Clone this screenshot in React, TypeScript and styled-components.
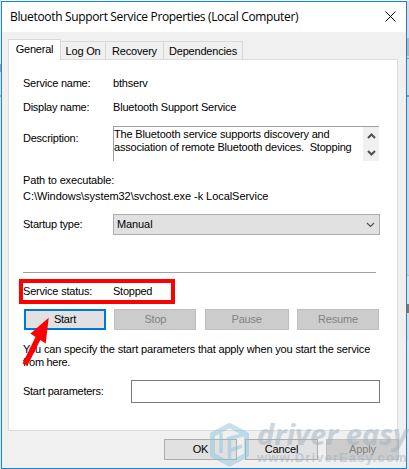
import React from 'react'
import styled, { createGlobalStyle } from 'styled-components'

const GlobalStyle = createGlobalStyle`
  * {
    box-sizing: border-box;
  }

  body {
    margin: 0;
    overflow: hidden;
    background: #dfe3e8;
  }
`

const Desktop = styled.div`
  position: relative;
  width: 409px;
  height: 469px;
  padding: 1px 2px 0 1px;
  overflow: hidden;
  background:
    linear-gradient(#e4e6e8 0 64px, #9a9fa5 64px 72px, #dce0e4 72px 95px, #a9b4be 95px 97px, #dfe4e9 97px) left / 1px 100% no-repeat,
    linear-gradient(
      #f4f4f4 0 1px, #d9dadd 1px 38px, #b4b7bb 38px 56px, #d4d8dc 56px 58px, #8f979f 58px 59px,
      #d4dae0 59px 95px, #7f9bb5 95px 97px, #d2d6da 97px 275px, #b9bfc5 275px 276px,
      #dde2e7 276px 304px, #8d7560 304px 313px, #d8dde2 313px 340px, #dfe5ea 340px
    );
  font: 11px/13px 'Liberation Sans', Arial, sans-serif;
  color: #000;
`

const Dialog = styled.div`
  display: flex;
  flex-direction: column;
  height: 468px;
  border: 1px solid #1883d7;
  background: #f0f0f0;
`

const TitleBar = styled.header`
  display: flex;
  justify-content: space-between;
  height: 30px;
  padding: 6px 10px 0 8px;
  background: #fff;
  font: 12px/17px 'Open Sans', sans-serif;
  white-space: nowrap;
`

const CloseIcon = styled.svg`
  width: 11px;
  height: 11px;
  margin-top: 3px;
`

const Text = styled.span<{ $track?: number }>`
  letter-spacing: ${p => p.$track ?? -0.2}px;
  white-space: pre;
`

const Tabs = styled.nav`
  display: flex;
  align-items: flex-end;
  height: 27px;
  padding-left: 6px;
`

const Tab = styled.div<{ $width: number; $active?: boolean }>`
  width: ${p => p.$width}px;
  height: ${p => (p.$active ? 21 : 18)}px;
  margin-bottom: ${p => (p.$active ? -1 : 0)}px;
  padding-top: 3px;
  border: 1px solid #d9d9d9;
  border-bottom: 0;
  border-left-width: ${p => (p.$active ? 1 : 0)}px;
  background: ${p => (p.$active ? '#fff' : '#f0f0f0')};
  text-align: center;
  z-index: 1;
`

const Panel = styled.main`
  display: flex;
  flex-direction: column;
  width: 390px;
  height: 372px;
  margin-left: 6px;
  padding: 17px 17px 0 14px;
  border: 1px solid #dcdcdc;
  background: #fff;
`

const Row = styled.div<{ $height: number; $label?: number }>`
  display: grid;
  grid-template-columns: ${p => p.$label || 90}px 1fr;
  align-items: center;
  flex: none;
  height: ${p => p.$height}px;
`

const DescriptionRow = styled(Row)`
  align-items: start;
  margin-top: 2px;
  line-height: 25px;
`

const Description = styled.div`
  display: flex;
  justify-content: space-between;
  height: 35px;
  margin-right: 1px;
  border-top: 1px solid #a0a0a0;
  border-left: 1px solid #a0a0a0;
  line-height: 13px;
`

const Lines = styled.div`
  display: flex;
  flex-direction: column;
  padding-top: 1px;
`

const ScrollBar = styled.div`
  display: flex;
  flex-direction: column;
  align-items: center;
  justify-content: center;
  gap: 11px;
  width: 16px;
  background: #f0f0f0;
`

const Chevron = styled.svg<{ $up?: boolean }>`
  width: 9px;
  height: 6px;
  transform: ${p => (p.$up ? 'rotate(180deg)' : 'none')};
`

const Path = styled.div`
  display: flex;
  flex-direction: column;
  margin: 11px 0 10px;
  line-height: 16px;
`

const Select = styled.div`
  display: flex;
  align-items: center;
  justify-content: space-between;
  height: 21px;
  padding: 0 4px 0 3px;
  border: 1px solid #adadad;
  background: #e1e1e1;
`

const Separator = styled.hr`
  flex: none;
  width: 353px;
  height: 1px;
  margin: 37px 0 6px;
  border: 0;
  background: #a0a0a0;
`

const Highlight = styled.div`
  display: grid;
  grid-template-columns: 90px 1fr;
  align-items: center;
  width: 156px;
  height: 25px;
  margin-left: -4px;
  border: 4px solid #f00;
`

const Buttons = styled.div`
  display: grid;
  grid-template-columns: 82px 82px 84px 82px;
  justify-content: space-between;
  width: 355px;
  margin: 5px 0 0 1px;
`

const Footer = styled.footer`
  display: flex;
  gap: 8px;
  padding: 8px 0 0 162px;
`

const Button = styled.button<{ $focused?: boolean }>`
  min-width: 73px;
  height: 21px;
  padding: 0;
  border: ${p => (p.$focused ? '2px solid #0078d7' : '1px solid #adadad')};
  background: #e1e1e1;
  color: #000;
  font: inherit;

  &:disabled {
    border-color: #bfbfbf;
    background: #ccc;
    color: #838383;
  }
`

const Hint = styled.p`
  display: flex;
  flex-direction: column;
  margin: 13px 0 11px;
`

const Input = styled.input`
  width: 249px;
  height: 23px;
  border: 1px solid #7a7a7a;
  background: #fff;
`

const Arrow = styled.svg`
  position: absolute;
  left: 0;
  top: 300px;
  width: 60px;
  height: 70px;
`

const Watermark = styled.div`
  position: absolute;
  left: 208px;
  top: 421px;
  display: flex;
  opacity: 0.5;
  pointer-events: none;
`

const Logo = styled.svg`
  width: 43px;
  height: 47px;
`

const Wordmark = styled.div`
  display: flex;
  flex-direction: column;
  margin: -4px 0 0 6px;
  color: #9fb0bf;
  white-space: nowrap;
`

const Brand = styled.span`
  font: italic bold 29px/34px 'Open Sans', sans-serif;
`

const Site = styled.span`
  font: bold 13px/14px 'Liberation Sans', Arial, sans-serif;
  letter-spacing: 1.1px;
`

const ChevronIcon = ({ up, bold }: { up?: boolean; bold?: boolean }) => (
  <Chevron $up={up} viewBox="0 0 9 6">
    <path d="M1 1 L4.5 4.5 L8 1" fill="none" stroke="#505050" strokeWidth={bold ? 2 : 1.2}/>
  </Chevron>
)

const App: React.FunctionComponent = () => {
  return <Desktop>
    <GlobalStyle/>
    <Dialog>
      <TitleBar>
        <Text $track={-0.34}>Bluetooth Support Service Properties (Local Computer)</Text>
        <CloseIcon viewBox="0 0 11 11">
          <path d="M.5 .5 L10.5 10.5 M10.5 .5 L.5 10.5" stroke="#000" strokeWidth="1"/>
        </CloseIcon>
      </TitleBar>
      <Tabs>
        <Tab $width={53} $active><Text>General</Text></Tab>
        <Tab $width={45}><Text>Log On</Text></Tab>
        <Tab $width={58}><Text>Recovery</Text></Tab>
        <Tab $width={79}><Text>Dependencies</Text></Tab>
      </Tabs>
      <Panel>
        <Row $height={13}><Text $track={-0.23}>Service name:</Text><Text>bthserv</Text></Row>
        <Row $height={34}><Text $track={-0.27}>Display name:</Text><Text $track={-0.18}>Bluetooth Support Service</Text></Row>
        <DescriptionRow $height={35}>
          <Text $track={-0.23}>Description:</Text>
          <Description>
            <Lines>
              <Text $track={-0.16}>The Bluetooth service supports discovery and</Text>
              <Text $track={-0.19}>association of remote Bluetooth devices.  Stopping</Text>
            </Lines>
            <ScrollBar>
              <ChevronIcon up bold/>
              <ChevronIcon bold/>
            </ScrollBar>
          </Description>
        </DescriptionRow>
        <Path>
          <Text $track={-0.16}>Path to executable:</Text>
          <Text $track={-0.06}>C:\Windows\system32\svchost.exe -k LocalService</Text>
        </Path>
        <Row $height={21}>
          <Text $track={-0.23}>Startup type:</Text>
          <Select><Text $track={-0.1}>Manual</Text><ChevronIcon/></Select>
        </Row>
        <Separator/>
        <Highlight><Text>Service status:</Text><Text $track={-0.25}>Stopped</Text></Highlight>
        <Buttons>
          <Button $focused><Text>Start</Text></Button>
          <Button disabled><Text>Stop</Text></Button>
          <Button disabled><Text>Pause</Text></Button>
          <Button disabled><Text>Resume</Text></Button>
        </Buttons>
        <Hint>
          <Text $track={-0.17}>You can specify the start parameters that apply when you start the service</Text>
          <Text $track={-0.3}>from here.</Text>
        </Hint>
        <Row $height={23} $label={108}><Text $track={-0.26}>Start parameters:</Text><Input/></Row>
      </Panel>
      <Footer>
        <Button><Text>OK</Text></Button>
        <Button><Text $track={-0.1}>Cancel</Text></Button>
        <Button disabled><Text $track={-0.1}>Apply</Text></Button>
      </Footer>
    </Dialog>
    <Arrow viewBox="0 0 60 70">
      <path d="M48.7 17.7 L45.7 43.5 L40.3 40 L27.5 65.5 L22.5 63.5 L35.5 37 L30.5 33.5 Z" fill="#f00"/>
    </Arrow>
    <Watermark>
      <Logo viewBox="0 0 43 47" fill="none" stroke="#8cc4dd" strokeWidth="5">
        <path d="M21.5 4.5 L38.5 13.5 V34 L21.5 43 L4.5 34 V13.5 Z" strokeLinejoin="round"/>
        <path d="M13 12 V32 M21.5 16 V43 M19 18 L38 13 M21 30 L34 25" strokeWidth="3.5"/>
      </Logo>
      <Wordmark><Brand>driver easy</Brand><Site>www.DriverEasy.com</Site></Wordmark>
    </Watermark>
  </Desktop>
}

export default App
